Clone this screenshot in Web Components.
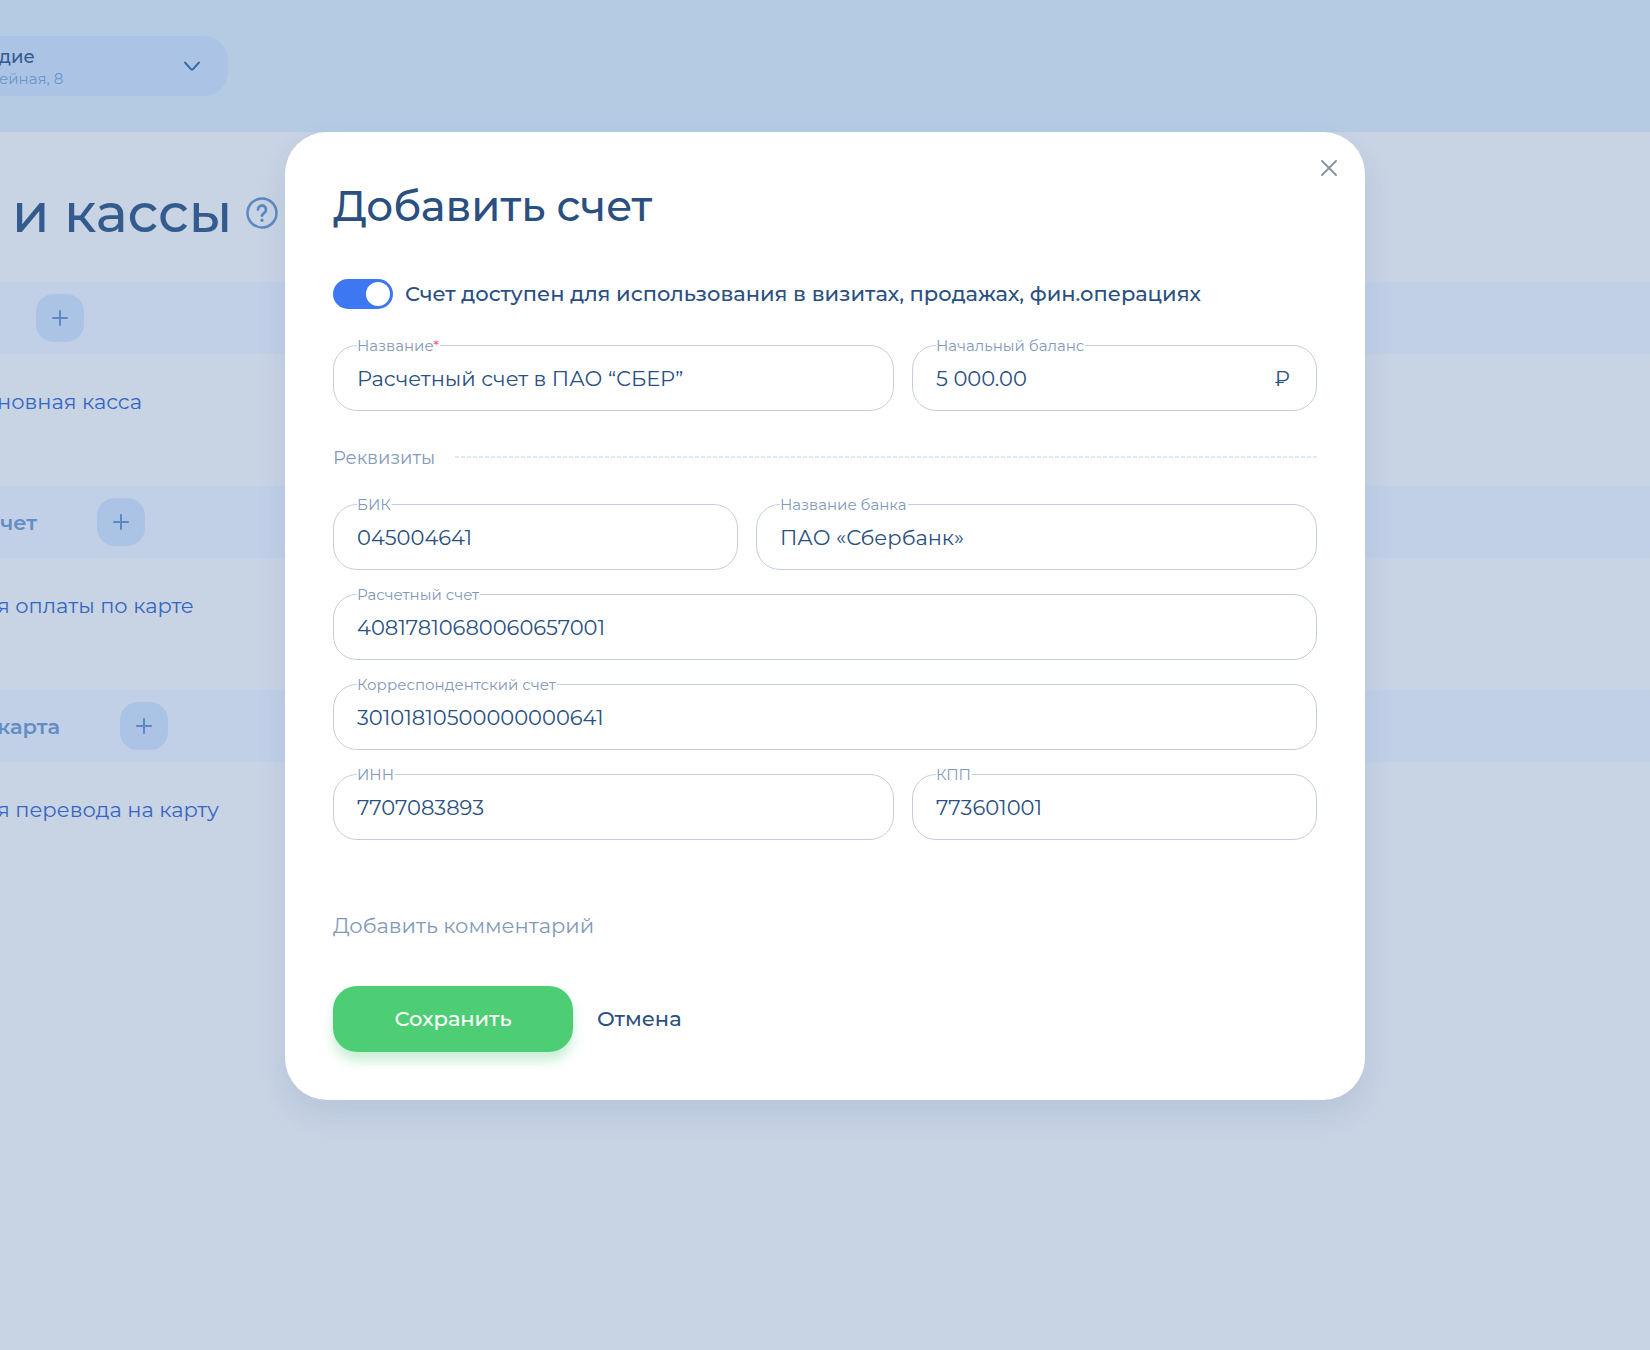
<!DOCTYPE html>
<html lang="ru">
<head>
<meta charset="utf-8">
<title>Счета и кассы</title>
<style>
  :root {
    --font: Montserrat, Inter, "Open Sans", sans-serif;
    --ink: #2a5081;
    --muted: #8299ba;
    --line: #c3cfdf;
    --text: 21px;
  }
  body {
    margin: 0;
    min-height: 100vh;
    background: #c8d3e4;
    color: var(--ink);
    font-family: var(--font);
    overflow-x: hidden;
  }
</style>
</head>
<body>
<accounts-page>
  <branch-select slot="header"><span slot="name">дие</span><span slot="address">ейная, 8</span></branch-select>
  <span slot="title">и кассы</span>
  <account-group style="--lead: 36px"><a slot="item" href="#cash">новная касса</a></account-group>
  <account-group style="--lead: 97px"><span slot="name">чет</span><a slot="item" href="#card-pay">я оплаты по карте</a></account-group>
  <account-group style="--lead: 120px"><span slot="name">карта</span><a slot="item" href="#card-transfer">я перевода на карту</a></account-group>
</accounts-page>

<modal-dialog>
  <span slot="title">Добавить счет</span>
  <toggle-switch>Счет доступен для использования в визитах, продажах, фин.операциях</toggle-switch>
  <field-row class="wide-first">
    <text-field label="Название" value="Расчетный счет в ПАО “СБЕР”" required></text-field>
    <text-field label="Начальный баланс" value="5 000.00" unit="₽"></text-field>
  </field-row>
  <section-divider>Реквизиты</section-divider>
  <field-stack>
    <field-row class="wide-last">
      <text-field label="БИК" value="045004641"></text-field>
      <text-field label="Название банка" value="ПАО «Сбербанк»"></text-field>
    </field-row>
    <text-field label="Расчетный счет" value="40817810680060657001"></text-field>
    <text-field label="Корреспондентский счет" value="30101810500000000641"></text-field>
    <field-row class="wide-first">
      <text-field label="ИНН" value="7707083893"></text-field>
      <text-field label="КПП" value="773601001"></text-field>
    </field-row>
  </field-stack>
  <action-button slot="comment" class="comment">Добавить комментарий</action-button>
  <action-button slot="actions" class="primary">Сохранить</action-button>
  <action-button slot="actions" class="plain">Отмена</action-button>
</modal-dialog>

<script>
  const define = (name, html, setup) => {
    const template = document.createElement('template');
    template.innerHTML = html;
    customElements.define(name, class extends HTMLElement {
      constructor() {
        super();
        this.attachShadow({ mode: 'open' }).append(template.content.cloneNode(true));
      }
      connectedCallback() { if (setup) setup(this, this.shadowRoot); }
    });
  };

  define('accounts-page', `
    <style>
      :host { display: block; }
      header { display: flex; align-items: center; height: 132px; background: #b5cbe4; }
      .heading { display: flex; align-items: center; gap: 14px; height: 150px; padding: 12px 0 0 12px; box-sizing: border-box; }
      h1 { margin: 0; font-size: 54px; font-weight: 500; line-height: 66px; color: #335b8d; white-space: nowrap; }
      .help { padding: 0; border: 0; background: none; height: 32px; }
    </style>
    <header><slot name="header"></slot></header>
    <main>
      <div class="heading">
        <h1><slot name="title"></slot></h1>
        <button class="help" aria-label="Справка">
          <svg width="32" height="32" viewBox="0 0 32 32" fill="none" stroke="#5c89c1" stroke-width="2.5" stroke-linecap="round" stroke-linejoin="round">
            <circle cx="16" cy="16" r="14.5"/><path d="M12 12.600a4 4 0 1 1 6.200 3.300c-1.400 1-2.200 1.500-2.200 2.800" stroke-width="2.800"/><path d="M16 23.200v.1" stroke-width="3.200"/>
          </svg>
        </button>
      </div>
      <slot></slot>
    </main>`);

  define('branch-select', `
    <style>
      :host { display: block; }
      button { display: flex; align-items: center; justify-content: space-between; width: 228px; height: 60px; padding: 0 27px 0 0;
        border: 0; border-radius: 0 24px 24px 0; background: #abc4e5; font: inherit; color: #335b8d; text-align: left; }
      .text { display: flex; flex-direction: column; padding-top: 4px; margin-left: -1px; }
      .name { font-size: 18px; font-weight: 500; line-height: 22px; }
      .address { font-size: 15px; line-height: 22px; color: #6c95cb; }
    </style>
    <button>
      <span class="text"><span class="name"><slot name="name"></slot></span><span class="address"><slot name="address"></slot></span></span>
      <svg width="18" height="12" viewBox="0 0 18 12" fill="none" stroke="#3f6ba8" stroke-width="2" stroke-linecap="round" stroke-linejoin="round"><path d="M2 2.500 7.900 9q1.100 1.100 2.200 0L16 2.500"/></svg>
    </button>`);

  define('account-group', `
    <style>
      :host { display: block; }
      .bar { display: grid; grid-template-columns: var(--lead) 48px; align-items: center; height: 72px; background: #c1d0e7; }
      h2 { justify-self: end; margin: 0; padding: 2px 60px 0 0; box-sizing: border-box; font-size: var(--text); font-weight: 600; line-height: 28px; color: #628ec3; white-space: nowrap; }
      button { display: grid; place-items: center; width: 48px; height: 48px; padding: 0; border: 0; border-radius: 18px; background: #abc4e5; grid-column: 2; }
      .items { height: 132px; margin-left: -3px; padding-top: 35px; box-sizing: border-box; font-size: var(--text); line-height: 26px; }
      ::slotted(a) { color: #3566c2; text-decoration: none; }
    </style>
    <div class="bar">
      <h2 hidden><slot name="name"></slot></h2>
      <button aria-label="Добавить"><svg width="16" height="16" viewBox="0 0 16 16" stroke="#5c89c1" stroke-width="2" stroke-linecap="round"><path d="M8 1v14M1 8h14"/></svg></button>
    </div>
    <div class="items"><slot name="item"></slot></div>`,
    (host, root) => { root.querySelector('h2').hidden = !host.querySelector('[slot=name]'); });

  define('modal-dialog', `
    <style>
      :host { position: absolute; inset: 0; display: flex; justify-content: center; align-items: flex-start; padding: 132px 24px 0; }
      section { position: relative; width: 100%; max-width: 1080px; padding: 48px; box-sizing: border-box; background: #fff;
        border-radius: 42px; box-shadow: 0 14px 28px rgba(60, 100, 150, .12); }
      h1 { margin: 0 0 46px; font-size: 42px; font-weight: 500; line-height: 53px; }
      .close { position: absolute; top: 24px; right: 24px; display: grid; place-items: center; width: 24px; height: 24px; padding: 0; border: 0; background: none; }
      .comment { margin: 72px 0 46px; }
      footer { display: flex; align-items: center; gap: 24px; }
    </style>
    <section role="dialog" aria-labelledby="title">
      <button class="close" aria-label="Закрыть"><svg width="18" height="18" viewBox="0 0 18 18" stroke="#8a959f" stroke-width="2" stroke-linecap="round"><path d="M2 2l14 14M16 2 2 16"/></svg></button>
      <h1 id="title"><slot name="title"></slot></h1>
      <slot></slot>
      <div class="comment"><slot name="comment"></slot></div>
      <footer><slot name="actions"></slot></footer>
    </section>`);

  define('toggle-switch', `
    <style>
      :host { display: block; margin-bottom: 36px; }
      label { display: flex; align-items: center; gap: 12px; font-size: var(--text); font-weight: 500; line-height: 30px; }
      input { appearance: none; flex: none; width: 60px; height: 30px; margin: 0; padding: 3px; box-sizing: border-box; border-radius: 15px; background: #b9c6d8; display: flex; }
      input::before { content: ""; width: 24px; height: 24px; border-radius: 50%; background: #fff; }
      input:checked { background: #3d78f2; justify-content: flex-end; }
    </style>
    <label for="toggle"><input id="toggle" type="checkbox" role="switch" checked><span><slot></slot></span></label>`);

  define('field-row', `
    <style>
      :host { display: grid; gap: 18px; }
      :host(.wide-first) { grid-template-columns: 1fr 405px; }
      :host(.wide-last) { grid-template-columns: 405px 1fr; }
    </style>
    <slot></slot>`);

  define('field-stack', `
    <style>:host { display: flex; flex-direction: column; gap: 24px; }</style>
    <slot></slot>`);

  define('text-field', `
    <style>
      :host { display: block; position: relative; min-width: 0; }
      label { position: absolute; left: 24px; top: -9px; padding-right: 1px; background: #fff; color: var(--muted); font-size: 15px; line-height: 20px; }
      .mark { color: #ff4d6d; }
      .box { display: flex; align-items: center; height: 66px; padding: 0 26px 0 23px; box-sizing: border-box; border: 1px solid var(--line); border-radius: 24px; }
      input { flex: 1; min-width: 0; height: 60px; padding: 0; border: 0; outline: 0; box-sizing: border-box; background: none; font: inherit; font-size: var(--text); color: var(--ink); }
      .unit { font-size: var(--text); line-height: 26px; padding-top: 2px; }
      [hidden] { display: none; }
    </style>
    <div class="box"><input id="control" type="text"><span class="unit" hidden></span></div>
    <label for="control"><span class="text"></span><span class="mark" hidden>*</span></label>`,
    (host, root) => {
      root.querySelector('.text').textContent = host.getAttribute('label');
      root.querySelector('input').value = host.getAttribute('value') || '';
      root.querySelector('.mark').hidden = !host.hasAttribute('required');
      const unit = root.querySelector('.unit');
      unit.textContent = host.getAttribute('unit') || '';
      unit.hidden = !host.hasAttribute('unit');
    });

  define('section-divider', `
    <style>
      :host { display: flex; align-items: center; gap: 20px; margin: 34px 0 35px; }
      h2 { margin: 0; padding-top: 2px; font-size: 18px; font-weight: 400; line-height: 22px; color: var(--muted); }
      i { flex: 1; height: 2px; background: repeating-linear-gradient(90deg, #dceafb 0 4px, transparent 4px 6px); }
    </style>
    <h2><slot></slot></h2><i></i>`);

  define('action-button', `
    <style>
      :host { display: block; }
      button { display: block; padding: 0; border: 0; background: none; font: inherit; font-size: var(--text); line-height: 28px; color: var(--ink); }
      :host(.comment) button { color: var(--muted); }
      :host(.plain) button { font-weight: 500; }
      :host(.primary) button { width: 240px; height: 66px; border-radius: 24px; background: #4dce75; color: #fff; font-weight: 500; box-shadow: 0 9px 12px rgba(79, 206, 119, .3); }
    </style>
    <button type="button"><slot></slot></button>`);
</script>
</body>
</html>
